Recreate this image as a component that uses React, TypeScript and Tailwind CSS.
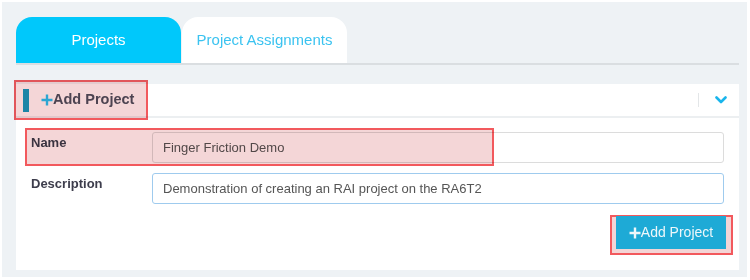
import { useState } from "react";

const ChevronDown = (): JSX.Element => (
  <svg width="12" height="8" viewBox="0 0 12 8" className="text-[#19b5ec]">
    <path d="M1.5 1.5 L6 6 L10.5 1.5" fill="none" stroke="currentColor" strokeWidth="2.6" strokeLinecap="round" strokeLinejoin="round" />
  </svg>
);

const Plus = ({ className }: { className: string }): JSX.Element => (
  <svg width="12" height="12" viewBox="0 0 12 12" className={className}>
    <path d="M6 0.5 V11.5 M0.5 6 H11.5" fill="none" stroke="currentColor" strokeWidth="2.4" />
  </svg>
);

const App = (): JSX.Element => {
  const [tab, setTab] = useState("projects");
  const [name, setName] = useState("Finger Friction Demo");
  const [description, setDescription] = useState(
    "Demonstration of creating an RAI project on the RA6T2",
  );

  return (
    <div
      className="relative h-[280px] w-[750px] bg-white p-[2px]"
      style={{ fontFamily: '"Liberation Sans", Arial, sans-serif' }}
    >
      <div className="h-[275px] w-[745px] bg-[#eef2f5] pl-[14px] pt-[15px]">
        {/* tabs */}
        <div className="flex w-[723px] border-b-2 border-[#dadee1]">
          <button
            type="button"
            onClick={(): void => setTab("projects")}
            className={`flex h-[46px] w-[165px] items-center justify-center rounded-t-[16px] text-[15px] ${
              tab === "projects" ? "bg-[#00c8fb] text-white" : "bg-white text-[#3bc3f0]"
            }`}
          >
            Projects
          </button>
          <button
            type="button"
            onClick={(): void => setTab("assignments")}
            className={`ml-[1px] flex h-[46px] w-[165px] items-center justify-center rounded-t-[16px] text-[15px] ${
              tab === "assignments" ? "bg-[#00c8fb] text-white" : "bg-white text-[#3bc3f0]"
            }`}
          >
            Project Assignments
          </button>
        </div>

        {/* card */}
        <div className="mt-[19px] h-[186px] w-[723px] bg-white">
          <div className="flex h-[34px] items-center border-b-2 border-[#eceff1] pl-[7px] pr-[12px]">
            <span className="mt-[1px] h-[23px] w-[6px] bg-[#1c9fc5]" />
            <span className="ml-[12px] flex items-center">
              <Plus className="text-[#2ec6fa]" />
              <span className="text-[14.5px] font-bold text-[#505060]">Add Project</span>
            </span>
            <span className="ml-auto h-[14px] w-px bg-[#e3e6e8]" />
            <span className="ml-[16px] flex items-center">
              <ChevronDown />
            </span>
          </div>

          <div className="flex flex-col gap-[10px] pl-[15px] pr-[15px] pt-[14px]">
            <div className="flex">
              <label className="w-[121px] pt-[1px] text-[13px] font-bold text-[#3d3d4c]">
                Name
              </label>
              <input
                value={name}
                onChange={(event): void => setName(event.target.value)}
                className="h-[31px] flex-1 rounded-[3px] border border-[#dcdcdc] bg-white px-[10px] text-[13px] text-[#555] outline-none"
              />
            </div>
            <div className="flex">
              <label className="w-[121px] pt-[1px] text-[13px] font-bold text-[#3d3d4c]">
                Description
              </label>
              <input
                value={description}
                onChange={(event): void => setDescription(event.target.value)}
                className="h-[31px] flex-1 rounded-[3px] border border-[#9fcbee] bg-white px-[10px] text-[13px] text-[#555] outline-none"
              />
            </div>
            <div className="mt-[2px] flex justify-end">
              <button
                type="button"
                className="relative z-10 mr-[-2px] flex h-[33px] w-[110px] items-center justify-center bg-[#1eaad6] text-[14px] text-[#eef7fa]"
              >
                <Plus className="text-[#eef7fa]" />
                Add Project
              </button>
            </div>
          </div>
        </div>
      </div>

      {/* annotation highlights */}
      <div className="pointer-events-none absolute left-[14px] top-[80px] h-[40px] w-[134px] border-2 border-[#f2595d] bg-[#f4d6d7] mix-blend-multiply" />
      <div className="pointer-events-none absolute left-[25px] top-[128px] h-[38px] w-[469px] border-2 border-[#f2595d] bg-[#f4d6d7] mix-blend-multiply" />
      <div className="pointer-events-none absolute left-[610px] top-[215px] z-0 h-[40px] w-[123px] border-2 border-[#f2595d] bg-[#f3d5d6]" />
    </div>
  );
};

export default App;
